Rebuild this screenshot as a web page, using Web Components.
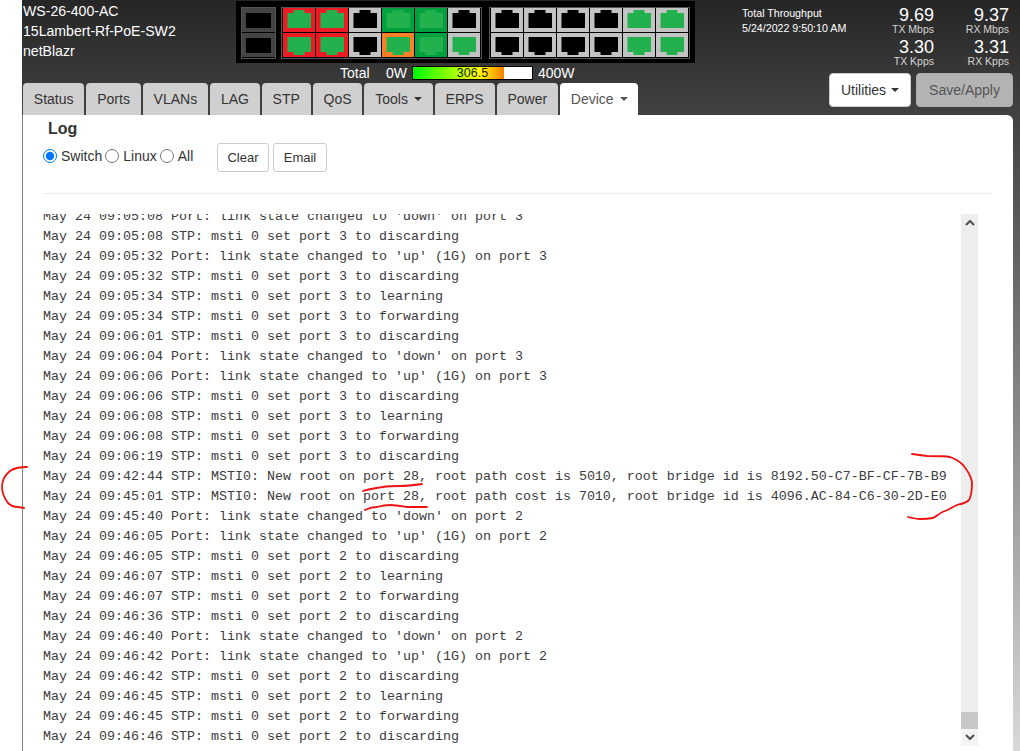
<!DOCTYPE html>
<html>
<head>
<meta charset="utf-8">
<title>Log</title>
<style>
  html, body { margin: 0; height: 751px; overflow: hidden; background: #fff; }
  body { font-family: "Liberation Sans", Arial, sans-serif; position: relative; }
</style>
</head>
<body>
<switch-app></switch-app>
<ink-marks></ink-marks>

<script>
const COLORS = { red: "#ed1c24", green: "#00a03e", orange: "#ff7f27", gray: "#c3c3c3" };

class NetPort extends HTMLElement {
  constructor() {
    super();
    const rim = COLORS[this.getAttribute("rim")] || "#c3c3c3";
    const on = this.hasAttribute("on");
    const low = this.hasAttribute("low");
    const fill = on ? "#22b14c" : "#000";
    const shape = low
      ? "4.5,4 28,4 28,19 21.5,19 21.5,22 10.5,22 10.5,19 4.5,19"
      : "4.5,5 10.5,5 10.5,2 21.5,2 21.5,5 28,5 28,20 4.5,20";
    this.attachShadow({mode: "open"}).innerHTML = `
      <style>:host{display:block;width:32px;height:24px} svg{display:block}</style>
      <svg width="32" height="24"><rect width="32" height="24" fill="${rim}"/><polygon points="${shape}" fill="${fill}"/></svg>`;
  }
}

class SfpPort extends HTMLElement {
  constructor() {
    super();
    this.attachShadow({mode: "open"}).innerHTML = `
      <style>
        :host{display:block;width:33px;height:24px;background:#444;box-sizing:border-box;padding:5px 4px 4px}
        div{background:#000;height:15px}
      </style><div></div>`;
  }
}

class PortPanel extends HTMLElement {
  constructor() {
    super();
    const port = (rim, on, low) => `<net-port rim="${rim}" ${on ? "on" : ""} ${low ? "low" : ""}></net-port>`;
    const group1 = [
      ["red",1],["red",1],["gray",0],["green",1],["green",1],["gray",0]
    ].map(p => port(p[0], p[1], false)).join("") + [
      ["red",1],["red",1],["gray",0],["orange",1],["green",1],["gray",1]
    ].map(p => port(p[0], p[1], true)).join("");
    const group2 = [0,0,0,0,1,1].map(on => port("gray", on, false)).join("")
      + [0,0,0,0,1,1].map(on => port("gray", on, true)).join("");
    this.attachShadow({mode: "open"}).innerHTML = `
      <style>
        :host{display:flex;width:459px;height:62px;background:#000;box-sizing:border-box;padding:6px 5px 4px;gap:5px}
        .group{border:1px solid #555;padding:0 1px;display:grid;grid-template-columns:repeat(6,32px);grid-auto-rows:24px;gap:1px;background:#000}
        .sfp{grid-template-columns:33px;padding:0}
        .gap{margin-left:2px}
      </style>
      <div class="group sfp"><sfp-port></sfp-port><sfp-port></sfp-port></div>
      <div class="group">${group1}</div>
      <div class="group gap">${group2}</div>`;
  }
}

class PowerBar extends HTMLElement {
  constructor() {
    super();
    const pct = this.getAttribute("value") / this.getAttribute("max") * 100;
    this.attachShadow({mode: "open"}).innerHTML = `
      <style>
        :host{display:flex;align-items:center;height:20px;padding-left:104px;color:#fff;font-size:14px}
        .total{width:46px}
        .bar{width:119px;height:12px;margin:0 5px;border:1px solid #000;background:#fff;position:relative;
             color:#222;font-size:12.5px;line-height:12px;text-align:center}
        .fill{position:absolute;left:0;top:0;bottom:0;width:${pct}%;background:linear-gradient(90deg,#00ff00,#ffff00 72%,#ff8000)}
        span.v{position:relative}
      </style>
      <span class="total">Total</span><span>0W</span>
      <div class="bar"><div class="fill"></div><span class="v">${this.getAttribute("value")}</span></div>
      <span>${this.getAttribute("max")}W</span>`;
  }
}

class StatTile extends HTMLElement {
  constructor() {
    super();
    this.attachShadow({mode: "open"}).innerHTML = `
      <style>
        :host{display:block;text-align:right;color:#fff;height:32px}
        .v{font-size:18px;line-height:19px}
        .l{font-size:10.5px;line-height:10px;color:#d4d4d4;margin-top:-1px}
      </style>
      <div class="v">${this.getAttribute("value")}</div><div class="l">${this.getAttribute("label")}</div>`;
  }
}

class NavTab extends HTMLElement {
  constructor() {
    super();
    const caret = this.hasAttribute("caret") ? `<i></i>` : "";
    this.attachShadow({mode: "open"}).innerHTML = `
      <style>
        :host{display:flex;align-items:center;height:32px;box-sizing:border-box;padding:0 10.85px;background:#d0d0d0;color:#333;
              font-size:14px;border-radius:4px 4px 0 0;white-space:nowrap}
        :host([active]){background:#fff;color:#555;height:33px;padding-bottom:1px}
        i{display:inline-block;margin-left:6px;border-top:4px solid currentColor;border-left:4px solid transparent;border-right:4px solid transparent}
      </style><slot></slot>${caret}`;
  }
}

class HeadButton extends HTMLElement {
  constructor() {
    super();
    const caret = this.hasAttribute("caret") ? `<i></i>` : "";
    this.attachShadow({mode: "open"}).innerHTML = `
      <style>
        :host{display:flex;align-items:center;justify-content:center;height:34px;box-sizing:border-box;background:#fff;color:#333;
              font-size:14px;border-radius:4px;border:1px solid #ccc}
        :host([muted]){background:#b3b3b3;color:#555;border-color:#adadad}
        i{display:inline-block;margin-left:5px;border-top:4px solid currentColor;border-left:4px solid transparent;border-right:4px solid transparent}
      </style><slot></slot>${caret}`;
  }
}

class SwitchHeader extends HTMLElement {
  constructor() {
    super();
    this.attachShadow({mode: "open"}).innerHTML = `
      <style>
        :host{display:flex;height:115px;color:#fff}
        .left{width:719px;display:flex;flex-direction:column}
        .top{display:flex;height:83px}
        .id{width:213px;font-size:14.1px;line-height:20px;padding-top:1px;box-sizing:border-box}
        .ports{padding-top:1px}
        .tabs{display:flex;gap:2px;margin-left:0}
        .right{width:271px;box-sizing:border-box;display:flex;flex-direction:column}
        .stats{display:flex;height:73px}
        .tp{width:117px;font-size:10.67px;line-height:15px;padding-top:6px;box-sizing:border-box}
        .grid{display:grid;grid-template-columns:75px 75px;grid-auto-rows:32px;padding-top:6px}
        .btns{display:flex;justify-content:flex-end;gap:5px}
        .btns head-button:first-child{width:82px}
        .btns head-button:last-child{width:97px}
      </style>
      <div class="left">
        <div class="top">
          <div class="id">WS-26-400-AC<br>15Lambert-Rf-PoE-SW2<br>netBlazr</div>
          <div class="ports"><port-panel></port-panel><power-bar value="306.5" max="400"></power-bar></div>
        </div>
        <div class="tabs">
          <nav-tab>Status</nav-tab><nav-tab>Ports</nav-tab><nav-tab>VLANs</nav-tab><nav-tab>LAG</nav-tab>
          <nav-tab>STP</nav-tab><nav-tab>QoS</nav-tab><nav-tab caret>Tools</nav-tab><nav-tab>ERPS</nav-tab>
          <nav-tab>Power</nav-tab><nav-tab active caret>Device</nav-tab>
        </div>
      </div>
      <div class="right">
        <div class="stats">
          <div class="tp">Total Throughput<br>5/24/2022 9:50:10 AM</div>
          <div class="grid">
            <stat-tile value="9.69" label="TX Mbps"></stat-tile><stat-tile value="9.37" label="RX Mbps"></stat-tile>
            <stat-tile value="3.30" label="TX Kpps"></stat-tile><stat-tile value="3.31" label="RX Kpps"></stat-tile>
          </div>
        </div>
        <div class="btns"><head-button caret>Utilities</head-button><head-button muted>Save/Apply</head-button></div>
      </div>`;
  }
}

class LogToolbar extends HTMLElement {
  constructor() {
    super();
    this.attachShadow({mode: "open"}).innerHTML = `
      <style>
        :host{display:flex;align-items:flex-start;color:#333;font-size:14px;height:29px}
        .radios{display:flex;align-items:center;height:26px;width:174px;white-space:nowrap}
        input{margin:0 4px 0 0;width:14px;height:14px}
        label{display:flex;align-items:center;margin-right:3px}
        button{font:13px "Liberation Sans",Arial,sans-serif;color:#333;background:#fff;border:1px solid #ccc;border-radius:3px;height:29px;padding:0;margin-right:4px}
        .c{width:52px}.e{width:54px}
      </style>
      <div class="radios">
        <label><input type="radio" name="src" checked>Switch</label>
        <label><input type="radio" name="src">Linux</label>
        <label><input type="radio" name="src">All</label>
      </div>
      <button class="c">Clear</button><button class="e">Email</button>`;
  }
}

class LogView extends HTMLElement {
  constructor() {
    super();
    const stp = (t, msg) => `May 24 ${t} STP: msti 0 set port ${msg}`;
    const port = (t, s, p) => `May 24 ${t} Port: link state changed to ${s} on port ${p}`;
    const lines = [
      port("09:05:08", "'down'", 3),
      stp("09:05:08", "3 to discarding"),
      port("09:05:32", "'up' (1G)", 3),
      stp("09:05:32", "3 to discarding"),
      stp("09:05:34", "3 to learning"),
      stp("09:05:34", "3 to forwarding"),
      stp("09:06:01", "3 to discarding"),
      port("09:06:04", "'down'", 3),
      port("09:06:06", "'up' (1G)", 3),
      stp("09:06:06", "3 to discarding"),
      stp("09:06:08", "3 to learning"),
      stp("09:06:08", "3 to forwarding"),
      stp("09:06:19", "3 to discarding"),
      "May 24 09:42:44 STP: MSTI0: New root on port 28, root path cost is 5010, root bridge id is 8192.50-C7-BF-CF-7B-B9",
      "May 24 09:45:01 STP: MSTI0: New root on port 28, root path cost is 7010, root bridge id is 4096.AC-84-C6-30-2D-E0",
      port("09:45:40", "'down'", 2),
      port("09:46:05", "'up' (1G)", 2),
      stp("09:46:05", "2 to discarding"),
      stp("09:46:07", "2 to learning"),
      stp("09:46:07", "2 to forwarding"),
      stp("09:46:36", "2 to discarding"),
      port("09:46:40", "'down'", 2),
      port("09:46:42", "'up' (1G)", 2),
      stp("09:46:42", "2 to discarding"),
      stp("09:46:45", "2 to learning"),
      stp("09:46:45", "2 to forwarding"),
      stp("09:46:46", "2 to discarding")
    ];
    this.attachShadow({mode: "open"}).innerHTML = `
      <style>
        :host{display:flex;height:532px;width:935px}
        .text{flex:1;overflow:hidden;font:13.333px/20px "Liberation Mono","Courier New",monospace;color:#3c3c3c;white-space:pre}
        .inner{margin-top:-7px}
        .bar{width:17px;background:#eee;display:flex;flex-direction:column;position:relative}
        .btn{height:17px;display:flex;align-items:center;justify-content:center}
        .track{flex:1;display:flex;flex-direction:column;justify-content:flex-end}
        .thumb{height:17px;background:#c8c8c8}
        .down{background:#f4f4f4}
      </style>
      <div class="text"><div class="inner">${lines.map(l => `<div>${l}</div>`).join("")}</div></div>
      <div class="bar">
        <div class="btn"><svg width="10" height="7"><path d="M1 6L5 2L9 6" fill="none" stroke="#505050" stroke-width="2"/></svg></div>
        <div class="track"><div class="thumb"></div></div>
        <div class="btn down"><svg width="10" height="7"><path d="M1 1L5 5L9 1" fill="none" stroke="#505050" stroke-width="2"/></svg></div>
      </div>`;
  }
}

class LogPanel extends HTMLElement {
  constructor() {
    super();
    this.attachShadow({mode: "open"}).innerHTML = `
      <style>
        :host{display:block;flex:1;background:#fff;border-radius:0 6px 0 0;box-sizing:border-box;padding:0 20px}
        h4{margin:0 0 0 5px;font-size:16px;line-height:18px;padding-top:5px;height:28px;box-sizing:border-box;color:#333;font-weight:bold}
        hr{border:0;border-top:1px solid #eee;margin:21px 0 20px;width:949px}
      </style>
      <h4>Log</h4>
      <log-toolbar></log-toolbar>
      <hr>
      <log-view></log-view>`;
  }
}

class SwitchApp extends HTMLElement {
  constructor() {
    super();
    this.attachShadow({mode: "open"}).innerHTML = `
      <style>
        :host{display:flex;flex-direction:column;height:751px;margin-left:22px;box-sizing:border-box;
              padding:0 7px 0 1px;background:linear-gradient(#262626,#d9d9d9);position:relative}
        :host::before{content:"";position:absolute;left:0;top:115px;bottom:0;width:1px;background:#808080}
      </style>
      <switch-header></switch-header>
      <log-panel></log-panel>`;
  }
}

// hand-drawn red marks sitting on top of the screenshot
class InkMarks extends HTMLElement {
  constructor() {
    super();
    this.attachShadow({mode: "open"}).innerHTML = `
      <style>:host{position:absolute;left:0;top:0;width:1020px;height:751px;pointer-events:none} svg{display:block}</style>
      <svg width="1020" height="751" fill="none" stroke="#ee1111" stroke-width="1.8" stroke-linecap="round" stroke-linejoin="round">
        <path d="M27 467C20 467 14 468 10 471C5 475 2 480 2 487C2 494 5 499 8 503C11 506 14 507 18 507L24 508"/>
        <path d="M912 454L927 456C936 456 945 456 950 457C956 459 960 462 963 465C968 471 971 476 972 482C972 489 972 495 969 500C966 503 961 504 957 505C952 507 949 510 945 511C941 512 937 516 933 518C928 519 924 519 920 519C916 519 912 518 908 517"/>
        <path d="M363 491C369 489 376 488 383 487C389 486 394 486 400 486C408 486 415 485 422 484"/>
        <path d="M365 510C369 508 373 507 377 507C381 506 386 505 390 505C396 505 401 506 407 507C414 507 421 507 427 507"/>
      </svg>`;
  }
}

customElements.define("net-port", NetPort);
customElements.define("sfp-port", SfpPort);
customElements.define("port-panel", PortPanel);
customElements.define("power-bar", PowerBar);
customElements.define("stat-tile", StatTile);
customElements.define("nav-tab", NavTab);
customElements.define("head-button", HeadButton);
customElements.define("switch-header", SwitchHeader);
customElements.define("log-toolbar", LogToolbar);
customElements.define("log-view", LogView);
customElements.define("log-panel", LogPanel);
customElements.define("switch-app", SwitchApp);
customElements.define("ink-marks", InkMarks);
</script>
</body>
</html>
